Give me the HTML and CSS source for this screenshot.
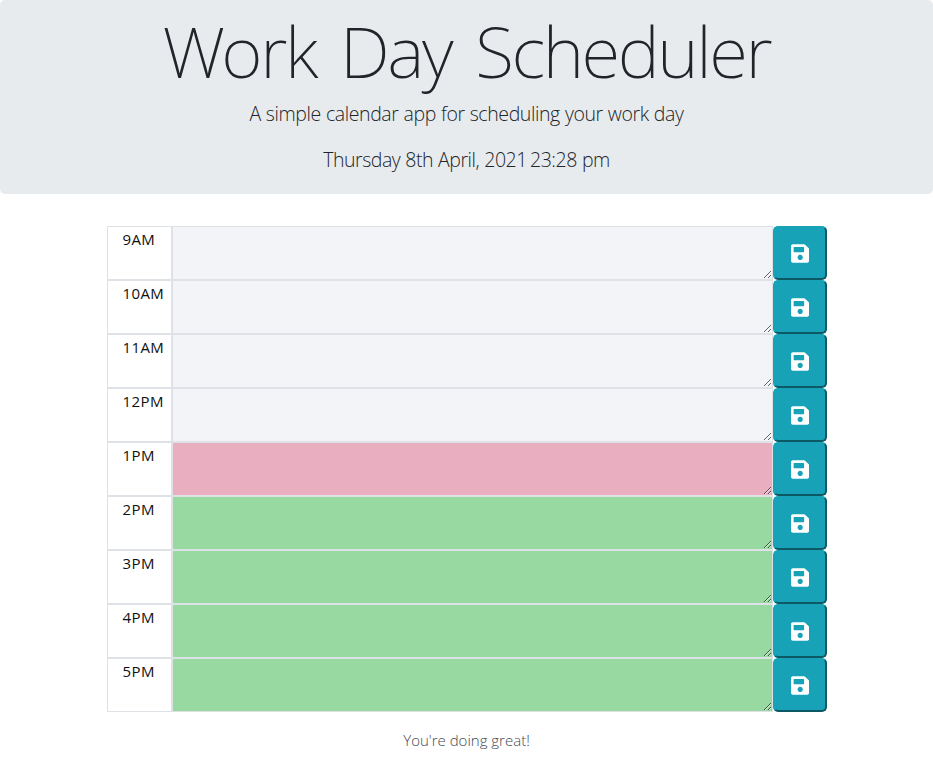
FILE: index.html
```html
<!DOCTYPE html>
<html lang="en">
<head>
<meta charset="utf-8">
<title>Work Day Scheduler</title>
<link rel="stylesheet" href="styles.css">
</head>
<body>
<header class="jumbotron">
<h1>Work Day Scheduler</h1>
<p class="lead">A simple calendar app for scheduling your work day</p>
<p class="lead date">Thursday 8th April, 2021<span class="time"> 23:28</span> pm</p>
</header>
<main class="container" id="rows"></main>
<footer>You're doing great!</footer>
<script src="script.js"></script>
</body>
</html>
```
FILE: styles.css
```css
* { box-sizing: border-box; }
body { margin: 0; font-family: "Open Sans", "Noto Sans", sans-serif; font-size: 16px; line-height: 24px; color: #212529; background: #fff; }
.jumbotron { height: 194px; background: #e8ebee; border-radius: 5px; text-align: center; overflow: hidden; }
h1 { margin: 3px 0 0; font-family: "Noto Sans", "Open Sans", sans-serif; font-weight: 200; font-size: 71px; line-height: 96px; letter-spacing: -2.4px; word-spacing: 8px; white-space: nowrap; }
.lead { margin: 0 0 16px; font-size: 19.5px; font-weight: 300; line-height: 30px; letter-spacing: -.4px; word-spacing: .4px; }
.date { letter-spacing: -.46px; }
.time { word-spacing: -1.5px; }
.container { width: 720px; margin: 32px auto 0; }
.time-block { display: grid; grid-template-columns: 65px 601px 54px; height: 54px; }
.hour { border: 1px solid #dee2e6; padding: 0 0 0 15px; font-size: 15px; letter-spacing: .4px; color: #111; }
textarea { width: 601px; height: 54px; margin: 0; border: 1px solid #dee2e6; padding: 2px 15px; resize: vertical; outline: none; overflow: auto; }
.past { background: #f3f4f7; }
.present { background: #e9aec0; }
.future { background: #97d9a1; }
.save { height: 54px; padding: 1px 0 0 1px; display: flex; align-items: center; justify-content: center; background: #17a2b8; border: 2px outset #17a2b8; border-radius: 5px; color: #fff; }
.save svg { height: 21px; fill: currentColor; }
footer { margin-top: 16px; text-align: center; font-size: 15px; font-weight: 300; letter-spacing: 0; color: #444a50; }
```
FILE: script.js
```js
const hours = ["9AM", "10AM", "11AM", "12PM", "1PM", "2PM", "3PM", "4PM", "5PM"];
document.getElementById("rows").innerHTML = hours.map((hour, i) => `
<div class="time-block"><div class="hour">${hour}</div>
<textarea class="${i < 4 ? "past" : i === 4 ? "present" : "future"}" aria-label="${hour}"></textarea>
<button class="save" aria-label="Save"><svg viewBox="0 0 448 512"><path d="M433.941 129.941l-83.882-83.882A48 48 0 0 0 316.118 32H48C21.49 32 0 53.49 0 80v352c0 26.51 21.49 48 48 48h352c26.51 0 48-21.49 48-48V163.882a48 48 0 0 0-14.059-33.941zM224 416c-35.346 0-64-28.654-64-64 0-35.346 28.654-64 64-64s64 28.654 64 64c0 35.346-28.654 64-64 64zm96-304.52V212c0 6.627-5.373 12-12 12H76c-6.627 0-12-5.373-12-12V108c0-6.627 5.373-12 12-12h228.52c3.183 0 6.235 1.264 8.485 3.515l3.48 3.48A11.996 11.996 0 0 1 320 111.48z"/></svg></button></div>`).join("");
```
